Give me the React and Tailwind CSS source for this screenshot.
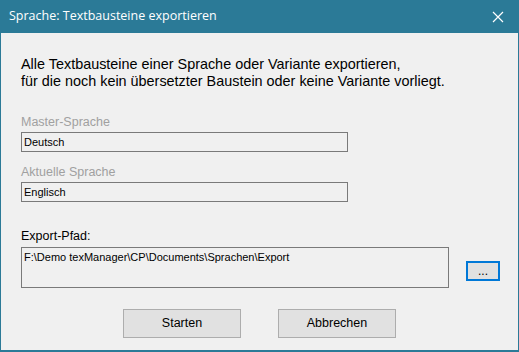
import React from 'react';

const sans = { fontFamily: '"Liberation Sans", Arial, sans-serif' };

const Field = ({ label, value, disabled }) => (
  <div className="flex flex-col">
    <span className={`text-[12.5px] leading-[16px] mb-[2px] ${disabled ? 'text-[#a0a0a0]' : 'text-black'}`}>{label}</span>
    <div className="w-[327px] h-[20px] border border-[#7a7a7a] bg-[#f0f0f0] px-[2px] text-[11px] leading-[18px] text-black">
      {value}
    </div>
  </div>
);

const App = () => {
  return (
    <div className="w-[519px] h-[352px] bg-[#2b7a97] flex flex-col px-[1px] pb-[2px]" style={sans}>
      <div className="h-[33px] flex items-center justify-between pl-[8px] pr-[14px] text-white">
        <span className="text-[12.5px]" style={{ fontFamily: '"Open Sans", "Noto Sans", sans-serif' }}>
          Sprache: Textbausteine exportieren
        </span>
        <svg width="12" height="12" viewBox="0 0 12 12" stroke="white" strokeWidth="1.2">
          <path d="M1 1L11 11M11 1L1 11" />
        </svg>
      </div>
      <div className="flex-1 bg-[#f0f0f0] flex flex-col pl-[20px] pt-[23px]">
        <p className="text-[14.4px] leading-[17px] text-black">
          Alle Textbausteine einer Sprache oder Variante exportieren,
          <br />
          für die noch kein übersetzter Baustein oder keine Variante vorliegt.
        </p>
        <div className="mt-[24px] flex flex-col gap-[12px]">
          <Field label="Master-Sprache" value="Deutsch" disabled />
          <Field label="Aktuelle Sprache" value="Englisch" disabled />
        </div>
        <span className="mt-[26px] text-[12.5px] leading-[16px] text-black">Export-Pfad:</span>
        <div className="mt-[3px] flex items-end">
          <div className="w-[428px] h-[41px] border border-[#7a7a7a] bg-[#f0f0f0] px-[2px] text-[11px] leading-[18px] text-black">
            F:\Demo texManager\CP\Documents\Sprachen\Export
          </div>
          <button className="ml-[17px] mb-[7px] w-[34px] h-[20px] border-2 border-[#0078d7] bg-[#e1e1e1] text-[12px] leading-[12px] text-black">
            ...
          </button>
        </div>
        <div className="mt-[21px] flex pl-[102px] gap-[37px]">
          <button className="w-[118px] h-[29px] border border-[#adadad] bg-[#e1e1e1] text-[12.5px] text-black">Starten</button>
          <button className="w-[118px] h-[29px] border border-[#adadad] bg-[#e1e1e1] text-[12.5px] text-black">Abbrechen</button>
        </div>
      </div>
    </div>
  );
};

export default App;
